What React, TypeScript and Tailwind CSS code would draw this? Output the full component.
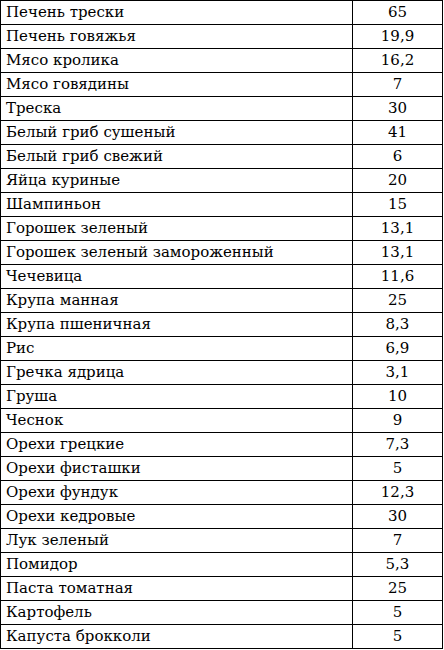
import React from "react";

const rows: [string, string][] = [
  ["Печень трески", "65"],
  ["Печень говяжья", "19,9"],
  ["Мясо кролика", "16,2"],
  ["Мясо говядины", "7"],
  ["Треска", "30"],
  ["Белый гриб сушеный", "41"],
  ["Белый гриб свежий", "6"],
  ["Яйца куриные", "20"],
  ["Шампиньон", "15"],
  ["Горошек зеленый", "13,1"],
  ["Горошек зеленый замороженный", "13,1"],
  ["Чечевица", "11,6"],
  ["Крупа манная", "25"],
  ["Крупа пшеничная", "8,3"],
  ["Рис", "6,9"],
  ["Гречка ядрица", "3,1"],
  ["Груша", "10"],
  ["Чеснок", "9"],
  ["Орехи грецкие", "7,3"],
  ["Орехи фисташки", "5"],
  ["Орехи фундук", "12,3"],
  ["Орехи кедровые", "30"],
  ["Лук зеленый", "7"],
  ["Помидор", "5,3"],
  ["Паста томатная", "25"],
  ["Картофель", "5"],
  ["Капуста брокколи", "5"],
];

export default function App() {
  return (
    <div className="bg-white w-[444px] h-[650px] font-['DejaVu_Serif',serif] text-black">
      <div className="w-[443px] border-l border-t border-black">
        {rows.map(([name, value]) => (
          <div key={name} className="flex h-6">
            <div className="w-[352px] border-r border-b border-black pl-[5px] text-[15px] leading-[23px] whitespace-nowrap">
              {name}
            </div>
            <div className="w-[90px] border-r border-b border-black text-center text-[15px] leading-[23px]">
              {value}
            </div>
          </div>
        ))}
      </div>
    </div>
  );
}
